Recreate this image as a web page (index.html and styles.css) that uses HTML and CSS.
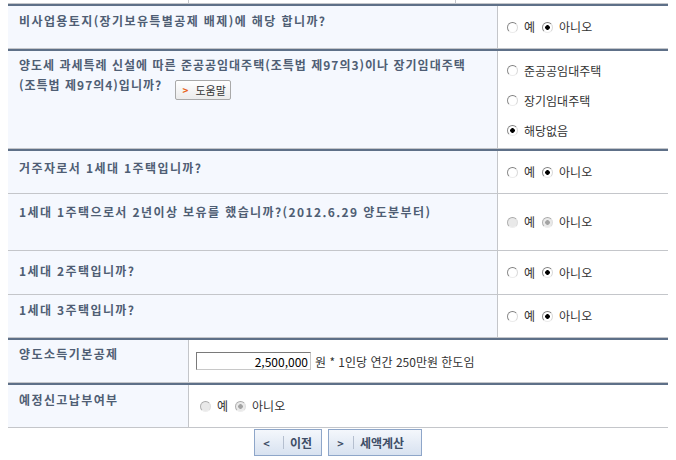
FILE: index.html
```html
<!DOCTYPE html>
<html lang="ko">
<head>
<meta charset="utf-8">
<title>양도소득세 계산</title>
<link rel="stylesheet" href="styles.css">
</head>
<body>
<div class="page">
  <div class="prev"><span class="pc pc1"></span><span class="pc pc2"></span><span class="pc"></span></div>

  <div class="group">
    <div class="row wide h42">
      <div class="q sp p5">비사업용토지(장기보유특별공제 배제)에 해당 합니까?</div>
      <div class="a">
        <label class="opt"><input class="rb" type="radio" name="q1">예</label>
        <label class="opt"><input class="rb" type="radio" name="q1" checked>아니오</label>
      </div>
    </div>
  </div>

  <div class="group">
    <div class="row wide h97">
      <div class="q sp1 p4">양도세 과세특례 신설에 따른 준공공임대주택(조특법 제97의3)이나 장기임대주택<br>(조특법 제97의4)입니까? <button class="help" type="button"><span class="chev">&gt;</span>도움말</button></div>
      <div class="a list">
        <label class="opt"><input class="rb" type="radio" name="q2">준공공임대주택</label>
        <label class="opt"><input class="rb" type="radio" name="q2">장기임대주택</label>
        <label class="opt"><input class="rb" type="radio" name="q2" checked>해당없음</label>
      </div>
    </div>
  </div>

  <div class="group">
    <div class="row wide h42">
      <div class="q sp pa3">거주자로서 1세대 1주택입니까?</div>
      <div class="a">
        <label class="opt"><input class="rb" type="radio" name="q3">예</label>
        <label class="opt"><input class="rb" type="radio" name="q3" checked>아니오</label>
      </div>
    </div>
    <div class="row wide h56">
      <div class="q sp pa4">1세대 1주택으로서 2년이상 보유를 했습니까?(2012.6.29 양도분부터)</div>
      <div class="a">
        <label class="opt"><input class="rb" type="radio" name="q4" disabled>예</label>
        <label class="opt"><input class="rb" type="radio" name="q4" checked disabled>아니오</label>
      </div>
    </div>
    <div class="row wide h43">
      <div class="q sp pa5">1세대 2주택입니까?</div>
      <div class="a">
        <label class="opt"><input class="rb" type="radio" name="q5">예</label>
        <label class="opt"><input class="rb" type="radio" name="q5" checked>아니오</label>
      </div>
    </div>
    <div class="row wide h42">
      <div class="q sp pa6">1세대 3주택입니까?</div>
      <div class="a">
        <label class="opt"><input class="rb" type="radio" name="q6">예</label>
        <label class="opt"><input class="rb" type="radio" name="q6" checked>아니오</label>
      </div>
    </div>
  </div>

  <div class="group">
    <div class="row narrow h42">
      <div class="q sp p4">양도소득기본공제</div>
      <div class="a val">
        <input class="amount" type="text" value="2,500,000"><span class="note">원 * 1인당 연간 250만원 한도임</span>
      </div>
    </div>
  </div>

  <div class="group">
    <div class="row narrow h42">
      <div class="q sp p5">예정신고납부여부</div>
      <div class="a val2">
        <label class="opt"><input class="rb" type="radio" name="q8" disabled>예</label>
        <label class="opt"><input class="rb" type="radio" name="q8" checked disabled>아니오</label>
      </div>
    </div>
  </div>

  <div class="btns">
    <button class="nav prevb" type="button"><span class="arr">&lt;</span><span class="bar"></span><span class="lbl">이전</span></button>
    <button class="nav nextb" type="button"><span class="arr">&gt;</span><span class="bar"></span><span class="lbl">세액계산</span></button>
  </div>
</div>
</body>
</html>
```

FILE: styles.css
```css
html, body {
  margin: 0;
  padding: 0;
  background: #ffffff;
}

body {
  font-family: "Noto Sans CJK KR", "Noto Sans", sans-serif;
  font-size: 12px;
  color: #333333;
}

.page {
  padding: 0 8px;
}

/* partial row of the previous table */
.prev {
  display: grid;
  grid-template-columns: 181px 267px 1fr;
  height: 3px;
  border-bottom: 1px solid #c4c6ca;
}

.pc1, .pc2 {
  border-right: 1px solid #c4c6ca;
}

.group {
  border-top: 2px solid #5e7088;
}

.row {
  display: grid;
  border-bottom: 1px solid #c4c6ca;
}

.row.wide {
  grid-template-columns: 490px 170px;
}

.row.narrow {
  grid-template-columns: 181px 479px;
}

.h42 { height: 42px; }
.h43 { height: 43px; }
.h56 { height: 56px; }
.h97 { height: 97px; }

.q {
  background: #f5f8fe;
  border-right: 1px solid #c4c6ca;
  padding: 4px 2px 0 11px;
  font-weight: bold;
  color: #4f5e74;
  line-height: 20px;
  white-space: nowrap;
}

.q.sp {
  letter-spacing: 1.4px;
}

.q.sp1 {
  letter-spacing: 1px;
}

.p4 { padding-top: 4px; }
.p5 { padding-top: 5px; }
.pa3 { padding-top: 7px; }
.pa4 { padding-top: 8px; }
.pa5 { padding-top: 10px; }
.pa6 { padding-top: 5px; }

.a {
  display: flex;
  align-items: center;
  padding-left: 9px;
  background: #ffffff;
}

.a.list {
  flex-direction: column;
  align-items: flex-start;
  justify-content: center;
  padding-top: 2px;
}

.a.list .opt {
  height: 30px;
}

.a.val {
  padding-left: 7px;
}

.a.val2 {
  padding-left: 11px;
}

.opt {
  display: inline-flex;
  align-items: center;
  line-height: 16px;
  margin-right: 7px;
  color: #333333;
}

.rb {
  appearance: none;
  -webkit-appearance: none;
  width: 11px;
  height: 11px;
  margin: 0 6px 0 0;
  border-radius: 50%;
  border: 1px solid;
  border-color: #7e7e7e #d9d9d9 #ececec #8c8c8c;
  background: #ffffff;
  box-sizing: border-box;
  flex: none;
}

.rb:checked {
  background: radial-gradient(circle, #000000 0 2px, #ffffff 2.6px);
}

.rb:disabled {
  background: #e9e9e9;
  border-color: #a8a8a8 #dddddd #eeeeee #b0b0b0;
}

.rb:disabled:checked {
  background: radial-gradient(circle, #a3a3a3 0 2px, #e9e9e9 2.6px);
}

.help {
  display: inline-flex;
  align-items: center;
  vertical-align: top;
  margin: 5px 0 0 8px;
  width: 56px;
  height: 20px;
  padding: 0 0 0 7px;
  border: 1px solid #a9a9a9;
  border-radius: 2px;
  background: linear-gradient(#ffffff, #ebebeb);
  font-family: inherit;
  font-size: 11px;
  font-weight: normal;
  letter-spacing: 0;
  color: #333333;
  line-height: 16px;
  box-sizing: border-box;
}

.chev {
  color: #e8641c;
  font-weight: bold;
  font-size: 10px;
  margin-right: 7px;
}

.amount {
  width: 115px;
  height: 18px;
  box-sizing: border-box;
  border: 1px solid;
  border-color: #7a7a7a #c8c8c8 #c8c8c8 #7a7a7a;
  padding: 0 2px;
  text-align: right;
  font-family: inherit;
  font-size: 12px;
  color: #000000;
  margin: 0 4px 0 0;
}

.note {
  color: #333333;
}

.btns {
  display: flex;
  justify-content: center;
  gap: 6px;
  margin-top: 1px;
}

.nav {
  display: flex;
  align-items: center;
  height: 27px;
  box-sizing: border-box;
  border: 1px solid #8ea6c9;
  background: linear-gradient(#f4f7fc, #d8e2f0);
  font-family: inherit;
  font-size: 12px;
  font-weight: bold;
  color: #3d4d66;
  padding: 0 0 0 8px;
}

.prevb { width: 68px; }
.nextb { width: 94px; }

.arr {
  width: 7px;
  font-size: 11px;
  color: #3d4d66;
}

.bar {
  width: 1px;
  height: 13px;
  background: #b5bfcf;
  margin: 0 6px 0 13px;
}

.nextb .bar {
  margin: 0 6px 0 9px;
}

.lbl {
  letter-spacing: 0;
}
```
